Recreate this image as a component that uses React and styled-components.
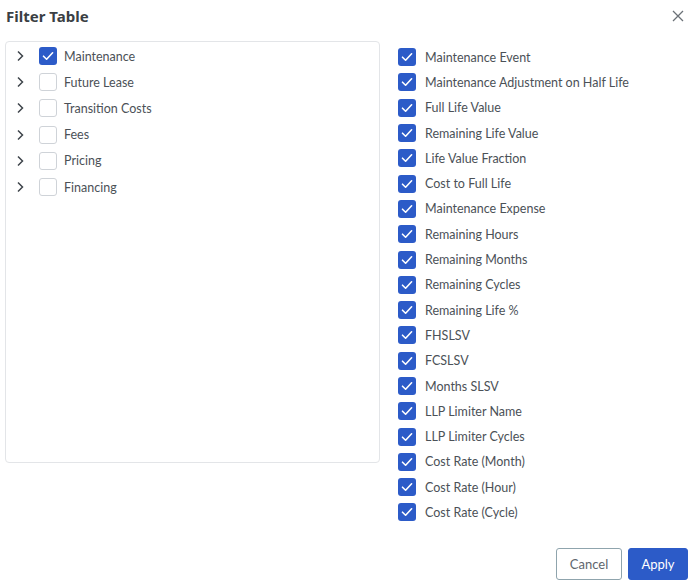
import styled, { createGlobalStyle } from "styled-components";

const GlobalStyle = createGlobalStyle`
  html, body {
    margin: 0;
    padding: 0;
    background: #ffffff;
  }
  body {
    font-family: Lato, "Noto Sans", "Liberation Sans", sans-serif;
    color: #4a4f55;
  }
`;

const Dialog = styled.div`
  width: 696px;
  height: 586px;
  box-sizing: border-box;
  padding: 0 8px 6px 5px;
  display: flex;
  flex-direction: column;
`;

const Header = styled.div`
  height: 32px;
  display: flex;
  align-items: center;
  justify-content: space-between;
  padding-left: 1px;
`;

const Title = styled.h2`
  margin: 0;
  font-family: "Noto Sans", "Liberation Sans", sans-serif;
  font-size: 15px;
  font-weight: 700;
  color: #3a3f44;
`;

const CloseButton = styled.button`
  border: none;
  background: none;
  padding: 0;
  width: 14px;
  height: 14px;
  margin-right: 3px;
  display: flex;
  align-items: center;
  justify-content: center;
  cursor: pointer;
`;

const Body = styled.div`
  display: flex;
  gap: 18px;
  margin-top: 9px;
`;

const TreePanel = styled.div`
  width: 375px;
  height: 422px;
  box-sizing: border-box;
  border: 1px solid #e3e5e8;
  border-radius: 4px;
  padding: 1px 0 0 7px;
  display: flex;
  flex-direction: column;
`;

const TreeRow = styled.div`
  height: 26.2px;
  display: flex;
  align-items: center;
`;

const Chevron = styled.span`
  width: 14px;
  height: 14px;
  display: flex;
  align-items: center;
  justify-content: center;
  margin-right: 12px;
`;

const ColumnList = styled.div`
  display: flex;
  flex-direction: column;
  padding-top: 3.5px;
`;

const ColumnRow = styled.label`
  height: 25.3px;
  display: flex;
  align-items: center;
`;

const Box = styled.span`
  width: 18px;
  height: 18px;
  box-sizing: border-box;
  border-radius: 3px;
  flex-shrink: 0;
  display: flex;
  align-items: center;
  justify-content: center;
  border: ${(p) => (p.$checked ? "none" : "1.5px solid #cfd3d8")};
  background: ${(p) => (p.$checked ? "#2c5bc8" : "#ffffff")};
  margin-right: ${(p) => p.$gap || "7px"};
`;

const Label = styled.span`
  font-size: 12.5px;
  color: #4b5157;
  white-space: nowrap;
`;

const Footer = styled.div`
  margin-top: auto;
  display: flex;
  justify-content: flex-end;
  gap: 6px;
`;

const Button = styled.button`
  width: ${(p) => (p.$primary ? "60px" : "66px")};
  height: 32px;
  box-sizing: border-box;
  border-radius: 3px;
  font-family: Lato, "Noto Sans", sans-serif;
  font-size: 13px;
  padding: 0;
  border: 1px solid ${(p) => (p.$primary ? "#2c5bc8" : "#8fa4ad")};
  background: ${(p) => (p.$primary ? "#2c5bc8" : "#ffffff")};
  color: ${(p) => (p.$primary ? "#ffffff" : "#5e666d")};
  cursor: pointer;
`;

const groups = [
  { name: "Maintenance", checked: true },
  { name: "Future Lease" },
  { name: "Transition Costs" },
  { name: "Fees" },
  { name: "Pricing" },
  { name: "Financing" },
];

const columns = [
  "Maintenance Event",
  "Maintenance Adjustment on Half Life",
  "Full Life Value",
  "Remaining Life Value",
  "Life Value Fraction",
  "Cost to Full Life",
  "Maintenance Expense",
  "Remaining Hours",
  "Remaining Months",
  "Remaining Cycles",
  "Remaining Life %",
  "FHSLSV",
  "FCSLSV",
  "Months SLSV",
  "LLP Limiter Name",
  "LLP Limiter Cycles",
  "Cost Rate (Month)",
  "Cost Rate (Hour)",
  "Cost Rate (Cycle)",
];

const Check = () => (
  <svg width="14" height="14" viewBox="0 0 14 14">
    <path d="M2.5 7.2 L5.6 10.2 L11.6 3.8" fill="none" stroke="#fff" strokeWidth="1.6" strokeLinecap="round" strokeLinejoin="round" />
  </svg>
);

const Checkbox = ({ checked, gap }) => (
  <Box $checked={checked} $gap={gap}>
    {checked && <Check />}
  </Box>
);

export default function App() {
  return (
    <>
      <GlobalStyle />
      <Dialog>
        <Header>
          <Title>Filter Table</Title>
          <CloseButton aria-label="Close">
            <svg width="12" height="12" viewBox="0 0 12 12">
              <path d="M1 1 L11 11 M11 1 L1 11" stroke="#6b7177" strokeWidth="1.3" />
            </svg>
          </CloseButton>
        </Header>
        <Body>
          <TreePanel>
            {groups.map((g) => (
              <TreeRow key={g.name}>
                <Chevron>
                  <svg width="10" height="12" viewBox="0 0 10 12">
                    <path d="M3 1.5 L7.5 6 L3 10.5" fill="none" stroke="#3f454b" strokeWidth="1.5" />
                  </svg>
                </Chevron>
                <Checkbox checked={g.checked} />
                <Label>{g.name}</Label>
              </TreeRow>
            ))}
          </TreePanel>
          <ColumnList>
            {columns.map((c) => (
              <ColumnRow key={c}>
                <Checkbox checked gap="9px" />
                <Label>{c}</Label>
              </ColumnRow>
            ))}
          </ColumnList>
        </Body>
        <Footer>
          <Button>Cancel</Button>
          <Button $primary>Apply</Button>
        </Footer>
      </Dialog>
    </>
  );
}
